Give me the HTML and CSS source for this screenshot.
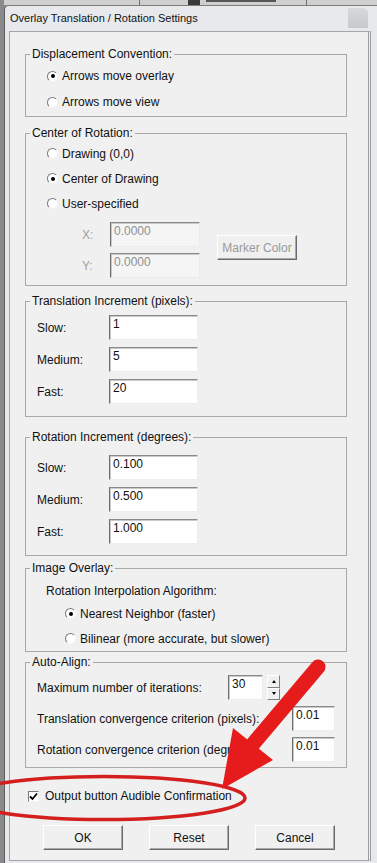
FILE: index.html
```html
<!DOCTYPE html>
<html lang="en">
<head>
    <meta charset="UTF-8">
    <meta name="viewport" content="width=device-width, initial-scale=1.0">
    <title>Overlay Translation / Rotation Settings</title>
    <link rel="stylesheet" href="styles.css">
</head>
<body>

    <!-- edge of the toolbar window lying behind the dialog -->
    <div class="behind">
        <span class="behind-sep"></span>
        <span class="behind-icon"></span>
        <span class="behind-bar"></span>
        <span class="behind-sep"></span>
    </div>

    <div class="window">
        <div class="titlebar">
            <span class="title">Overlay Translation / Rotation Settings</span>
            <span class="title-shade"></span>
        </div>

        <div class="client">
            <fieldset class="group displacement">
                <legend>Displacement Convention:</legend>
                <div class="option"><span class="radio checked"></span>Arrows move overlay</div>
                <div class="option"><span class="radio"></span>Arrows move view</div>
            </fieldset>

            <fieldset class="group center">
                <legend>Center of Rotation:</legend>
                <div class="option"><span class="radio"></span>Drawing (0,0)</div>
                <div class="option"><span class="radio checked"></span>Center of Drawing</div>
                <div class="option"><span class="radio"></span>User-specified</div>
                <div class="coords">
                    <div class="coord-grid">
                        <span class="coord-label">X:</span>
                        <input class="field coord-field" type="text" value="0.0000" disabled>
                        <span class="coord-label">Y:</span>
                        <input class="field coord-field" type="text" value="0.0000" disabled>
                    </div>
                    <button class="btn marker-btn" disabled>Marker Color</button>
                </div>
            </fieldset>

            <fieldset class="group increments translation">
                <legend>Translation Increment (pixels):</legend>
                <div class="inc-row"><span class="inc-label">Slow:</span><input class="field inc-field" type="text" value="1"></div>
                <div class="inc-row"><span class="inc-label">Medium:</span><input class="field inc-field" type="text" value="5"></div>
                <div class="inc-row"><span class="inc-label">Fast:</span><input class="field inc-field" type="text" value="20"></div>
            </fieldset>

            <fieldset class="group increments rotation">
                <legend>Rotation Increment (degrees):</legend>
                <div class="inc-row"><span class="inc-label">Slow:</span><input class="field inc-field" type="text" value="0.100"></div>
                <div class="inc-row"><span class="inc-label">Medium:</span><input class="field inc-field" type="text" value="0.500"></div>
                <div class="inc-row"><span class="inc-label">Fast:</span><input class="field inc-field" type="text" value="1.000"></div>
            </fieldset>

            <fieldset class="group overlay">
                <legend>Image Overlay:</legend>
                <div class="sub-label">Rotation Interpolation Algorithm:</div>
                <div class="option"><span class="radio checked"></span>Nearest Neighbor (faster)</div>
                <div class="option"><span class="radio"></span>Bilinear (more accurate, but slower)</div>
            </fieldset>

            <fieldset class="group autoalign">
                <legend>Auto-Align:</legend>
                <div class="align-row">
                    <span class="align-label short">Maximum number of iterations:</span>
                    <input class="field spin-field" type="text" value="30">
                    <span class="spin">
                        <span class="spin-btn"><i class="tri up"></i></span>
                        <span class="spin-btn"><i class="tri down"></i></span>
                    </span>
                </div>
                <div class="align-row">
                    <span class="align-label">Translation convergence criterion (pixels):</span>
                    <input class="field crit-field" type="text" value="0.01">
                </div>
                <div class="align-row">
                    <span class="align-label">Rotation convergence criterion (degrees):</span>
                    <input class="field crit-field" type="text" value="0.01">
                </div>
            </fieldset>

            <div class="check-row">
                <span class="checkbox">
                    <svg width="9" height="9" viewBox="0 0 9 9"><path d="M1 4.5 L3.5 7 L8 1.5" fill="none" stroke="#000" stroke-width="1.8"/></svg>
                </span>
                Output button Audible Confirmation
            </div>

            <div class="buttons">
                <button class="btn">OK</button>
                <button class="btn">Reset</button>
                <button class="btn">Cancel</button>
            </div>
        </div>
    </div>

    <!-- red markup drawn over the screenshot -->
    <svg class="markup" width="377" height="863" viewBox="0 0 377 863">
        <ellipse cx="104" cy="798" rx="141" ry="21.5" fill="none" stroke="#d41f1f" stroke-width="3.5"/>
        <line x1="318" y1="667" x2="253" y2="744" stroke="#e61c1c" stroke-width="15" stroke-linecap="round"/>
        <polygon points="233,728 273,760 222,789" fill="#e61c1c"/>
    </svg>

</body>
</html>
```

FILE: styles.css
```css
body {
    margin: 0;
    width: 377px;
    height: 863px;
    overflow: hidden;
    position: relative;
    font-family: "Liberation Sans", Arial, sans-serif;
    font-size: 12px;
    color: #111;
    background-color: #8a8a8a;
}
.behind {
    height: 5px;
    margin-left: 4px;
    display: flex;
    background-color: #cfcfcf;
    overflow: hidden;
}
.behind-sep {
    width: 1px;
    margin-left: 135px;
    background-color: #6e6e6e;
}
.behind-icon {
    width: 12px;
    margin-left: 48px;
    background-color: #3a3a3a;
}
.behind-bar {
    width: 70px;
    height: 2px;
    margin: 0 0 0 6px;
    background-color: #555;
}
.behind-sep:last-child {
    margin-left: 30px;
}
.window {
    margin-left: 4px;
    height: 858px;
    background-color: #e7e9ec;
    border-left: 1px solid #5e5e5e;
    border-top: 1px solid #7d7d7d;
    border-radius: 5px 0 0 0;
}
.titlebar {
    height: 25px;
    display: flex;
    align-items: center;
    padding: 0 0 2px 5px;
    box-sizing: border-box;
}
.title {
    font-size: 11px;
    color: #111;
}
.title-shade {
    margin-left: auto;
    margin-right: 9px;
    width: 20px;
    height: 20px;
    border-radius: 2px 5px 0 0;
    background: linear-gradient(#d6d8da, #c6c8ca);
}

/* dialog client area */
.client {
    margin-left: 4px;
    width: 362px;
    height: 830px;
    box-sizing: border-box;
    padding: 14px 21px 0 15px;
    background-color: #f0f0f0;
    border: 1px solid #a6a6a6;
    border-right: 3px double #9a9a9a;
}
.group {
    margin: 0;
    padding: 0;
    min-inline-size: 0;
    border: 1px solid #a8a8a8;
}
.group legend {
    margin-left: 4px;
    padding: 0 2px;
    line-height: 16px;
    color: #111;
}
.option {
    height: 25px;
    display: flex;
    align-items: center;
    padding-left: 21px;
}
.radio {
    width: 11px;
    height: 11px;
    box-sizing: border-box;
    margin-right: 4px;
    border-radius: 50%;
    border: 1px solid;
    border-color: #7a7a7a #f4f4f4 #f4f4f4 #7a7a7a;
    background-color: #fff;
    position: relative;
}
.radio.checked::after {
    content: "";
    position: absolute;
    left: 2.5px;
    top: 2.5px;
    width: 4px;
    height: 4px;
    border-radius: 50%;
    background-color: #000;
}

.displacement {
    padding: 1px 0 1px;
}
.displacement .option {
    height: 26px;
}
.center {
    margin-top: 8px;
    padding: 0 0 7px;
}
.coords {
    display: flex;
    align-items: center;
    padding-top: 6px;
}
.coord-grid {
    display: grid;
    grid-template-columns: 28px 90px;
    row-gap: 6px;
    align-items: center;
    margin-left: 56px;
}
.coord-label {
    color: #a0a0a0;
}
.marker-btn {
    width: 81px;
    margin: 0 0 5px 17px;
}

.field {
    box-sizing: border-box;
    height: 25px;
    margin: 0;
    padding: 0 2px 7px 3px;
    font-family: inherit;
    font-size: 12px;
    color: #111;
    background-color: #fff;
    border: 1px solid;
    border-color: #8a8a8a #ececec #ececec #6d6d6d;
    box-shadow: inset 1px 1px 0 #c9c9c9;
    outline: none;
}
.field:disabled {
    color: #8f8f8f;
    background-color: #f5f5f5;
}
.coord-field {
    width: 90px;
}

.translation {
    margin-top: 7px;
    padding: 6px 0 12px;
}
.rotation {
    margin-top: 12px;
    padding: 10px 0 11px;
}
.inc-row {
    display: flex;
    align-items: center;
    padding-left: 11px;
}
.inc-row + .inc-row {
    margin-top: 7px;
}
.inc-label {
    width: 72px;
}
.inc-field {
    width: 89px;
}

.overlay {
    margin-top: 4px;
    padding: 5px 0 0;
}
.sub-label {
    height: 20px;
    line-height: 20px;
    padding-left: 20px;
}
.overlay .option {
    padding-left: 39px;
}

.autoalign {
    margin-top: 2px;
    padding: 5px 0 5px;
}
.align-row {
    display: flex;
    align-items: center;
    padding-left: 11px;
}
.align-row + .align-row {
    margin-top: 6px;
}
.align-label {
    flex: 0 0 255px;
    white-space: nowrap;
}
.align-label.short {
    flex-basis: 191px;
}
.spin-field {
    width: 35px;
}
.crit-field {
    width: 43px;
}
.spin {
    display: flex;
    flex-direction: column;
    width: 13px;
    height: 25px;
    margin-left: 4px;
}
.spin-btn {
    flex: 1;
    display: flex;
    align-items: center;
    justify-content: center;
    background-color: #f0f0f0;
    border: 1px solid;
    border-color: #fff #808080 #808080 #fff;
}
.tri {
    width: 0;
    height: 0;
    border-left: 2.5px solid transparent;
    border-right: 2.5px solid transparent;
}
.tri.up {
    border-bottom: 3px solid #000;
}
.tri.down {
    border-top: 3px solid #000;
}

.check-row {
    display: flex;
    align-items: center;
    height: 18px;
    margin-top: 19px;
    padding-left: 3px;
}
.checkbox {
    width: 11px;
    height: 11px;
    box-sizing: border-box;
    margin-right: 6px;
    display: flex;
    align-items: center;
    justify-content: center;
    background-color: #fff;
    border: 1px solid;
    border-color: #7a7a7a #f4f4f4 #f4f4f4 #7a7a7a;
}

.buttons {
    display: flex;
    gap: 26px;
    margin-top: 20px;
    padding-left: 18px;
}
.btn {
    box-sizing: border-box;
    width: 80px;
    height: 25px;
    padding: 0;
    font-family: inherit;
    font-size: 12px;
    color: #111;
    background-color: #f0f0f0;
    border: 1px solid;
    border-color: #fff #6a6a6a #6a6a6a #fff;
    box-shadow: inset -1px -1px 0 #a9a9a9;
}
.btn:disabled {
    color: #9a9a9a;
}

.markup {
    position: absolute;
    left: 0;
    top: 0;
    pointer-events: none;
}
```
